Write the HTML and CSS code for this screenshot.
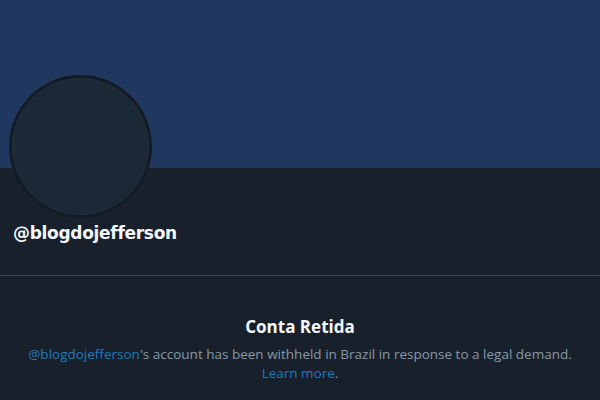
FILE: index.html
```html
<!DOCTYPE html>
<html lang="en">
<head>
    <meta charset="UTF-8">
    <title>@blogdojefferson</title>
    <link rel="stylesheet" href="styles.css">
</head>
<body>
    <div class="banner"></div>
    <div class="profile">
        <div class="avatar"><div class="avatar-inner"></div></div>
        <div class="handle">@blogdojefferson</div>
    </div>
    <div class="withheld">
        <h2>Conta Retida</h2>
        <p><a href="#">@blogdojefferson</a>'s account has been withheld in Brazil in response to a legal demand.<br><a href="#">Learn more</a>.</p>
    </div>
</body>
</html>
```

FILE: styles.css
```css
body {
    margin: 0;
    background-color: #18202b;
    font-family: 'Open Sans', sans-serif;
    height: 400px;
    overflow: hidden;
}

.banner {
    height: 168px;
    background-color: #203760;
}

.profile {
    display: flow-root;
    padding: 0 0 0 9px;
    height: 107px;
    border-bottom: 1px solid #3b4652;
}

.avatar {
    width: 143px;
    height: 143px;
    margin-top: -93px;
    border-radius: 50%;
    background-color: #131b25;
    padding: 3px;
    box-sizing: border-box;
}

.avatar-inner {
    width: 100%;
    height: 100%;
    border-radius: 50%;
    background-color: #1b2835;
    box-sizing: border-box;
    border: 1px solid #222f3d;
}

.handle {
    margin: 4px 0 0 4px;
    font-family: 'DejaVu Sans', sans-serif;
    font-weight: bold;
    font-size: 17px;
    line-height: 22px;
    color: #f5f8fa;
    letter-spacing: -0.3px;
}

.withheld {
    text-align: center;
    padding-top: 39px;
}

.withheld h2 {
    margin: 0 0 7px;
    font-size: 17px;
    line-height: 23px;
    font-weight: bold;
    color: #f5f8fa;
}

.withheld p {
    margin: 0;
    font-size: 13.5px;
    line-height: 19px;
    color: #8899a6;
}

.withheld a {
    color: #1f7ab8;
    text-decoration: none;
}
```
